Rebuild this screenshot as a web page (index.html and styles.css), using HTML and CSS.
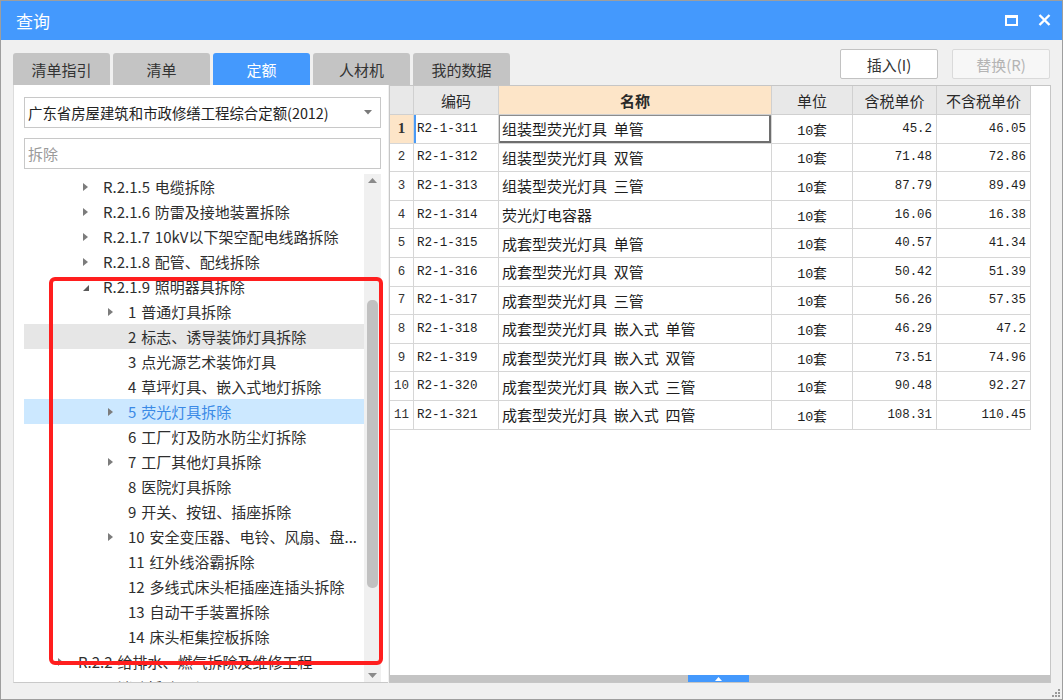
FILE: index.html
```html
<!DOCTYPE html>
<html lang="zh-CN">
<head>
<meta charset="utf-8">
<title>查询</title>
<link rel="stylesheet" href="styles.css">
</head>
<body>
<div class="window">
  <div class="titlebar">
    <span class="title">查询</span>
    <div class="wctl">
      <svg class="ic-max" width="13" height="11" viewBox="0 0 13 11"><rect x="1" y="1" width="11" height="9" fill="none" stroke="#fff" stroke-width="2"/><rect x="0" y="0" width="13" height="3" fill="#fff"/></svg>
      <svg class="ic-close" width="13" height="12" viewBox="0 0 13 12"><path d="M1.5 1 L11.5 11 M11.5 1 L1.5 11" stroke="#fff" stroke-width="2.4" fill="none"/></svg>
    </div>
  </div>
  <div class="toolbar">
    <div class="tabs">
      <div class="tab">清单指引</div>
      <div class="tab">清单</div>
      <div class="tab active">定额</div>
      <div class="tab">人材机</div>
      <div class="tab">我的数据</div>
    </div>
    <div class="btns">
      <div class="btn">插入(I)</div>
      <div class="btn disabled">替换(R)</div>
    </div>
  </div>
  <div class="main">
    <div class="lpanel">
      <div class="combo"><span>广东省房屋建筑和市政修缮工程综合定额(2012)</span><svg width="8" height="5" viewBox="0 0 8 5"><path d="M0 0 H8 L4 4.5 Z" fill="#7a7a7a"/></svg></div>
      <div class="search">拆除</div>
      <div class="treewrap">
        <div class="tree">
          <div class="node l1"><span class="arr"><i class="tri-r"></i></span>R.2.1.5 电缆拆除</div>
          <div class="node l1"><span class="arr"><i class="tri-r"></i></span>R.2.1.6 防雷及接地装置拆除</div>
          <div class="node l1"><span class="arr"><i class="tri-r"></i></span>R.2.1.7 10kV以下架空配电线路拆除</div>
          <div class="node l1"><span class="arr"><i class="tri-r"></i></span>R.2.1.8 配管、配线拆除</div>
          <div class="node l1"><span class="arr"><i class="tri-d"></i></span>R.2.1.9 照明器具拆除</div>
          <div class="node l2"><span class="arr"><i class="tri-r"></i></span>1 普通灯具拆除</div>
          <div class="node l2 hover"><span class="arr"></span>2 标志、诱导装饰灯具拆除</div>
          <div class="node l2"><span class="arr"></span>3 点光源艺术装饰灯具</div>
          <div class="node l2"><span class="arr"></span>4 草坪灯具、嵌入式地灯拆除</div>
          <div class="node l2 sel"><span class="arr"><i class="tri-r"></i></span>5 荧光灯具拆除</div>
          <div class="node l2"><span class="arr"></span>6 工厂灯及防水防尘灯拆除</div>
          <div class="node l2"><span class="arr"><i class="tri-r"></i></span>7 工厂其他灯具拆除</div>
          <div class="node l2"><span class="arr"></span>8 医院灯具拆除</div>
          <div class="node l2"><span class="arr"></span>9 开关、按钮、插座拆除</div>
          <div class="node l2"><span class="arr"><i class="tri-r"></i></span><span class="ell">10 安全变压器、电铃、风扇、盘...</span></div>
          <div class="node l2"><span class="arr"></span>11 红外线浴霸拆除</div>
          <div class="node l2"><span class="arr"></span>12 多线式床头柜插座连插头拆除</div>
          <div class="node l2"><span class="arr"></span>13 自动干手装置拆除</div>
          <div class="node l2"><span class="arr"></span>14 床头柜集控板拆除</div>
          <div class="node l0"><span class="arr"><i class="tri-r"></i></span>R.2.2 给排水、燃气拆除及维修工程</div>
          <div class="node l0 last"><span class="arr"><i class="tri-r"></i></span>R.2.3 消防拆除工程</div>
        </div>
        <div class="vscroll">
          <svg class="sa-up" width="9" height="5" viewBox="0 0 9 5"><path d="M0 5 H9 L4.5 0 Z" fill="#8a8a8a"/></svg>
          <div class="vtrack"><div class="vthumb"></div></div>
          <svg class="sa-down" width="9" height="5" viewBox="0 0 9 5"><path d="M0 0 H9 L4.5 5 Z" fill="#8a8a8a"/></svg>
        </div>
      </div>
    </div>
    <div class="rpanel">
      <div class="grid">
        <div class="row head">
          <div class="c rn"></div>
          <div class="c">编码</div>
          <div class="c name-h">名称</div>
          <div class="c">单位</div>
          <div class="c">含税单价</div>
          <div class="c">不含税单价</div>
        </div>
        <div class="row first">
          <div class="c rn cur">1</div>
          <div class="c code codecur">R2-1-311</div>
          <div class="c name focus">组装型荧光灯具  单管</div>
          <div class="c unit">10套</div>
          <div class="c num">45.2</div>
          <div class="c num">46.05</div>
        </div>
        <div class="row">
          <div class="c rn">2</div>
          <div class="c code">R2-1-312</div>
          <div class="c name">组装型荧光灯具  双管</div>
          <div class="c unit">10套</div>
          <div class="c num">71.48</div>
          <div class="c num">72.86</div>
        </div>
        <div class="row">
          <div class="c rn">3</div>
          <div class="c code">R2-1-313</div>
          <div class="c name">组装型荧光灯具  三管</div>
          <div class="c unit">10套</div>
          <div class="c num">87.79</div>
          <div class="c num">89.49</div>
        </div>
        <div class="row">
          <div class="c rn">4</div>
          <div class="c code">R2-1-314</div>
          <div class="c name">荧光灯电容器</div>
          <div class="c unit">10套</div>
          <div class="c num">16.06</div>
          <div class="c num">16.38</div>
        </div>
        <div class="row">
          <div class="c rn">5</div>
          <div class="c code">R2-1-315</div>
          <div class="c name">成套型荧光灯具  单管</div>
          <div class="c unit">10套</div>
          <div class="c num">40.57</div>
          <div class="c num">41.34</div>
        </div>
        <div class="row">
          <div class="c rn">6</div>
          <div class="c code">R2-1-316</div>
          <div class="c name">成套型荧光灯具  双管</div>
          <div class="c unit">10套</div>
          <div class="c num">50.42</div>
          <div class="c num">51.39</div>
        </div>
        <div class="row">
          <div class="c rn">7</div>
          <div class="c code">R2-1-317</div>
          <div class="c name">成套型荧光灯具  三管</div>
          <div class="c unit">10套</div>
          <div class="c num">56.26</div>
          <div class="c num">57.35</div>
        </div>
        <div class="row">
          <div class="c rn">8</div>
          <div class="c code">R2-1-318</div>
          <div class="c name">成套型荧光灯具  嵌入式  单管</div>
          <div class="c unit">10套</div>
          <div class="c num">46.29</div>
          <div class="c num">47.2</div>
        </div>
        <div class="row">
          <div class="c rn">9</div>
          <div class="c code">R2-1-319</div>
          <div class="c name">成套型荧光灯具  嵌入式  双管</div>
          <div class="c unit">10套</div>
          <div class="c num">73.51</div>
          <div class="c num">74.96</div>
        </div>
        <div class="row">
          <div class="c rn">10</div>
          <div class="c code">R2-1-320</div>
          <div class="c name">成套型荧光灯具  嵌入式  三管</div>
          <div class="c unit">10套</div>
          <div class="c num">90.48</div>
          <div class="c num">92.27</div>
        </div>
        <div class="row">
          <div class="c rn">11</div>
          <div class="c code">R2-1-321</div>
          <div class="c name">成套型荧光灯具  嵌入式  四管</div>
          <div class="c unit">10套</div>
          <div class="c num">108.31</div>
          <div class="c num">110.45</div>
        </div>
      </div>
      <div class="hbar"><div class="hthumb"><svg width="7" height="4" viewBox="0 0 7 4"><path d="M0 4 H7 L3.5 0 Z" fill="#fff"/></svg></div></div>
    </div>
  </div>
  <div class="status">
    <svg class="grip" width="9" height="9" viewBox="0 0 9 9" fill="#9a9a9a"><rect x="7" y="1" width="2" height="2"/><rect x="4" y="4" width="2" height="2"/><rect x="7" y="4" width="2" height="2"/><rect x="1" y="7" width="2" height="2"/><rect x="4" y="7" width="2" height="2"/><rect x="7" y="7" width="2" height="2"/></svg>
  </div>
  <div class="annot"></div>
</div>
</body>
</html>
```
FILE: styles.css
```css
* { box-sizing: border-box; }
html, body { margin: 0; padding: 0; }
body {
  font-family: "Noto Sans CJK SC", "Noto Sans", sans-serif;
  color: #2b2b2b;
  background: #ffffff;
}
.window {
  position: relative;
  width: 1063px;
  height: 700px;
  border: 1px solid #9e9e9e;
  background: #f0f0f0;
  display: flex;
  flex-direction: column;
  overflow: hidden;
}
.titlebar {
  height: 39px;
  flex: none;
  background: #4499fd;
  display: flex;
  align-items: center;
  justify-content: space-between;
  padding-left: 15px;
  padding-right: 11px;
}
.title {
  color: #ffffff;
  font-size: 17px;
  line-height: 20px;
}
.wctl {
  display: flex;
  align-items: center;
  gap: 20px;
  margin-top: -1px;
}
.toolbar {
  height: 45px;
  flex: none;
  display: flex;
  justify-content: space-between;
  padding-left: 12px;
  padding-right: 12px;
}
.tabs {
  align-self: flex-end;
  display: flex;
  gap: 3px;
}
.tab {
  width: 97px;
  height: 32px;
  background: #c4c4c4;
  border-radius: 3px 3px 0 0;
  display: flex;
  align-items: center;
  justify-content: center;
  font-size: 15px;
  color: #333333;
}
.tab.active {
  background: #4499fd;
  color: #ffffff;
}
.btns {
  display: flex;
  gap: 14px;
  margin-top: 9px;
}
.btn {
  width: 98px;
  height: 30px;
  background: #ffffff;
  border: 1px solid #c2c2c2;
  border-radius: 2px;
  display: flex;
  align-items: center;
  justify-content: center;
  font-size: 15px;
  color: #333333;
}
.btn.disabled {
  background: #f7f7f7;
  border-color: #dadada;
  color: #b4b4b4;
}
.main {
  height: 598px;
  flex: none;
  display: flex;
  gap: 1px;
  padding-left: 12px;
}
.lpanel {
  width: 375px;
  height: 598px;
  background: #ffffff;
  border-left: 1px solid #dcdcdc;
  border-bottom: 1px solid #c9c9c9;
  padding: 12px 7px 0 10px;
  display: flex;
  flex-direction: column;
}
.combo {
  height: 31px;
  flex: none;
  border: 1px solid #c8c8c8;
  display: flex;
  align-items: center;
  justify-content: space-between;
  padding: 0 8px 0 3px;
  font-size: 14.4px;
  color: #222222;
  white-space: nowrap;
}
.search {
  height: 31px;
  flex: none;
  margin-top: 10px;
  border: 1px solid #c8c8c8;
  display: flex;
  align-items: center;
  padding-left: 3px;
  font-size: 15px;
  color: #9a9a9a;
}
.treewrap {
  margin-top: 5px;
  flex: 1;
  display: flex;
  min-height: 0;
}
.tree {
  flex: 1;
  overflow: hidden;
}
.node {
  height: 25px;
  display: flex;
  align-items: center;
  font-size: 15px;
  word-spacing: 1.5px;
  color: #2e2e2e;
  white-space: nowrap;
}
.node.l0 { padding-left: 34px; }
.node.l1 { padding-left: 59px; }
.node.l2 { padding-left: 84px; }
.node.hover { background: #e6e6e6; }
.node.sel { background: #cce8ff; color: #3a8ae6; }
.node.last { align-items: flex-start; padding-top: 3px; }
.arr {
  width: 20px;
  flex: none;
  display: flex;
  align-items: center;
  align-self: center;
}
.tri-r {
  width: 0;
  height: 0;
  border-top: 4.5px solid transparent;
  border-bottom: 4.5px solid transparent;
  border-left: 5px solid #7c7c7c;
}
.tri-d {
  width: 0;
  height: 0;
  border-left: 6px solid transparent;
  border-bottom: 6px solid #5a5a5a;
  margin-top: 2px;
}
.ell {
  display: block;
  white-space: nowrap;
}
.vscroll {
  width: 17px;
  flex: none;
  background: #f0f0f0;
  display: flex;
  flex-direction: column;
  align-items: center;
  padding: 4px 0 4px;
}
.vtrack {
  flex: 1;
  width: 100%;
  display: flex;
  justify-content: center;
  padding-top: 117px;
}
.vthumb {
  width: 11px;
  height: 288px;
  background: #c1c1c1;
  border-radius: 5px;
}
.rpanel {
  width: 662px;
  height: 598px;
  border: 1px solid #c6c6c6;
  background: #ffffff;
  display: flex;
  flex-direction: column;
}
.grid {
  flex: 1;
}
.row {
  display: grid;
  grid-template-columns: 24px 85px 273px 81px 84px 94px;
  height: 28.6px;
}
.row.head { height: 29px; }
.c {
  border-right: 1px solid #d6d6d6;
  border-bottom: 1px solid #d6d6d6;
  display: flex;
  align-items: center;
  white-space: pre;
  overflow: hidden;
  font-size: 15px;
  color: #1e1e1e;
}
.head .c {
  background: #e8e8e8;
  border-color: #d0d0d0;
  justify-content: center;
  color: #2a2a2a;
}
.head .name-h {
  background: #fde5c8;
  font-weight: bold;
}
.rn {
  justify-content: center;
  font-family: "Liberation Mono", "DejaVu Sans Mono", monospace;
  font-size: 12.5px;
  color: #333333;
}
.rn.cur {
  background: #fde5c8;
  font-family: "Liberation Serif", serif;
  font-weight: bold;
  font-size: 15px;
}
.code {
  padding-left: 3px;
  font-family: "Liberation Mono", "DejaVu Sans Mono", monospace;
  font-size: 12.6px;
}
.codecur { box-shadow: inset 2px 0 0 #4a9af5; }
.name {
  padding-left: 3px;
}
.name.focus {
  box-shadow: inset 1px 1px 0 #8c8c8c, inset -2px -2px 0 #6e6e6e;
}
.unit {
  justify-content: center;
  font-family: "Liberation Mono", "Noto Sans CJK SC", monospace;
  font-size: 13.5px;
}
.num {
  justify-content: flex-end;
  padding-right: 4px;
  font-family: "Liberation Mono", "DejaVu Sans Mono", monospace;
  font-size: 12.4px;
}
.hbar {
  height: 7px;
  flex: none;
  background: #c4c4c4;
  display: flex;
  padding-left: 298px;
}
.hthumb {
  width: 61px;
  height: 7px;
  background: #4499fd;
  display: flex;
  align-items: center;
  justify-content: center;
}
.status {
  flex: 1;
  display: flex;
  justify-content: flex-end;
  align-items: flex-end;
  padding: 0 2px 2px 0;
}
.annot {
  position: absolute;
  left: 48px;
  top: 276px;
  width: 334px;
  height: 388px;
  border: 4px solid #ff1e1e;
  border-radius: 6px;
  pointer-events: none;
}
```
